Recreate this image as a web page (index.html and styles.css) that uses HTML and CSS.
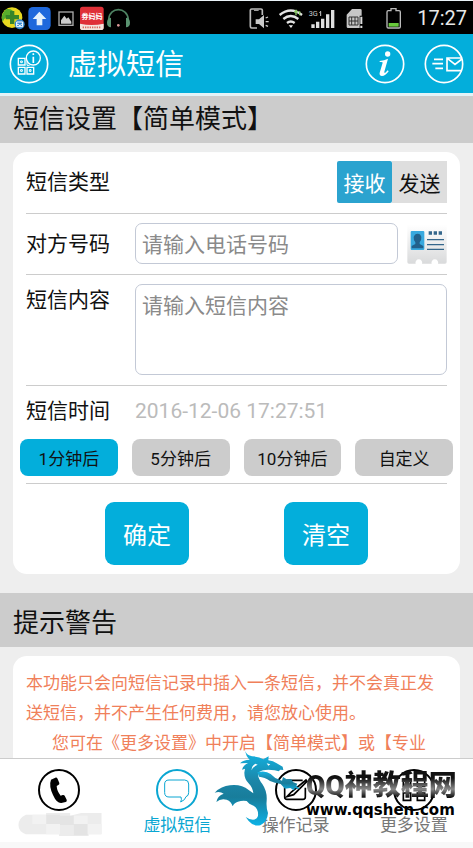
FILE: index.html
```
<!DOCTYPE html>
<html lang="zh-CN">
<head>
    <meta charset="UTF-8">
    <meta name="viewport" content="width=device-width, initial-scale=1.0">
    <title>虚拟短信</title>
    <link rel="stylesheet" href="styles.css">
</head>
<body>
    <div class="status-bar">
        <div class="status-group">
            <svg class="status-icon small" viewBox="3 6 75 90">
                <circle cx="36" cy="50" r="31" fill="#e8d820"/>
                <path d="M8 62a31 31 0 0 1 12-38q20-2 22 14-22 2-34 24z" fill="#58ad2c"/>
                <path d="M30 30h13v12h14v13H43v14H30V55H17V42h13z" fill="#36852a"/>
                <circle cx="59" cy="70" r="15" fill="#3587d0"/>
                <path d="M50 63h18v14H50zM50 70h5l2 3h5l2-3h4" fill="none" stroke="#fff" stroke-width="3"/>
            </svg>
            <svg class="status-icon small" viewBox="81 6 75 90">
                <rect x="85" y="18" width="67" height="69" rx="14" fill="#1e68dc"/>
                <path d="M118 32l21 22h-12v19h-17V54H98z" fill="#e4f1fc"/>
            </svg>
            <svg class="status-icon small" viewBox="159 6 75 90">
                <rect x="177" y="33" width="42" height="40" fill="none" stroke="#aaa" stroke-width="4"/>
                <path d="M183 68V58l10-14 7 9 5-4 9 13v6z" fill="#ccc"/>
            </svg>
            <svg class="status-icon small" viewBox="237 6 75 90">
                <rect x="240" y="17" width="71" height="70" rx="8" fill="#df3038"/>
                <path d="M240 68q36 8 71 0v12q0 7-8 7h-55q-8 0-8-7z" fill="#f4e5df"/>
                <text x="276" y="54" class="app-name">券妈妈</text>
                <path d="M248 79h55" stroke="#d9695e" stroke-width="5" stroke-dasharray="4 3"/>
            </svg>
            <svg class="status-icon small" viewBox="315 6 75 90">
                <path d="M326 56C328 16 382 16 385 56" fill="none" stroke="#4d8262" stroke-width="5"/>
                <path d="M333 50v29q-12-1-12-14t12-15zM378 50v29q12-1 12-14t-12-15z" fill="#5a9471"/>
                <circle cx="355" cy="73" r="4" fill="#d99"/>
            </svg>
        </div>
        <div class="status-group">
            <svg class="status-icon" viewBox="36 6 90 90">
                <path d="M82 42V28q0-4-4-4H50q-4 0-4 4v48q0 5 4 5h16" fill="none" stroke="#bbb" stroke-width="5"/>
                <path d="M57 28h14" stroke="#bbb" stroke-width="3"/>
                <path d="M62 55h10l15-13v40L72 69H62z" fill="#c9c9c9"/>
                <path d="M92 51l7-3M92 62h9M92 73l7 3" stroke="#ccc" stroke-width="4"/>
            </svg>
            <svg class="status-icon" viewBox="126 6 90 90">
                <g fill="none" stroke="#e4e4e4" stroke-width="7">
                    <path d="M134 42q33-27 67 0"/>
                    <path d="M145 54q22-18 45 0"/>
                    <path d="M156 66q11-9 23 0"/>
                </g>
                <path d="M161 73h13l-6 8z" fill="#eee"/>
                <path d="M183 43V29m-5 5l5-6 5 6M194 31v12" fill="none" stroke="#86c963" stroke-width="4"/>
            </svg>
            <svg class="status-icon" viewBox="216 6 90 90">
                <text x="221" y="46" class="network">3G</text>
                <path d="M257 31v14m-4-10l4-4" stroke="#ccc" stroke-width="3"/>
                <path d="M229 70h10v11h-10zM243 62h10v19h-10zM258 53h10v28h-10zM273 40h10v41h-10zM288 27h10v54h-10z" fill="#dedede"/>
            </svg>
            <svg class="status-icon" viewBox="306 6 90 90">
                <path d="M335 41l16-17h25q4 0 4 4v16h-6v37h-35q-4 0-4-4z" fill="#c7c7c7"/>
                <path d="M342 48h27v24h-27zM350 48v24M360 48v24M342 60h27" fill="none" stroke="#333" stroke-width="3"/>
                <path d="M379 47v22M379 74v7" stroke="#ddd" stroke-width="6"/>
            </svg>
            <svg class="status-icon battery" viewBox="396 6 120 90">
                <path d="M468 29v-6h15v6h9q4 0 4 4v44q0 4-4 4h-32q-4 0-4-4V33q0-4 4-4z" fill="none" stroke="#bbb" stroke-width="4"/>
                <path d="M461 66h30v11h-30z" fill="#69c93c"/>
            </svg>
            <span class="clock">17:27</span>
        </div>
    </div>

    <header class="header">
        <svg class="header-icon" viewBox="27 130 120 120">
            <circle cx="87" cy="190" r="56" stroke-width="5"/>
            <path d="M55 173h20v20H55zM55 200h20v20H55zM81 200h20v20H81z" stroke-width="4"/>
            <path d="M62 181h5v5h-5zM62 207h5v5h-5zM88 207h5v5h-5zM81 182v12h8" stroke-width="3"/>
            <circle cx="100" cy="172" r="21" stroke-width="4" fill="#03aedb"/>
            <path d="M100 158v5M100 168v19" stroke-width="5"/>
        </svg>
        <h1>虚拟短信</h1>
        <button class="icon-button" aria-label="说明">
            <svg class="header-icon" viewBox="390 130 120 120">
                <circle cx="450" cy="190" r="56" stroke-width="5"/>
                <circle cx="458" cy="160" r="8" class="solid"/>
                <path d="M434 181q14-1 25-7l-11 39q-1 5 3 3l7-7 3 3q-10 14-20 14-9-1-7-10l9-30q1-3-9-2z" class="solid"/>
            </svg>
        </button>
        <button class="icon-button" aria-label="发送">
            <svg class="header-icon" viewBox="568 130 120 120">
                <circle cx="628" cy="190" r="56" stroke-width="5"/>
                <path d="M681 172h-44v38h44M638 173l23 18 21-16M598 176h27M593 189h32M602 203h23" stroke-width="5"/>
            </svg>
        </button>
    </header>

    <main class="content">
        <h2 class="section-title first">短信设置【简单模式】</h2>
        <form class="card">
            <div class="row">
                <span class="label">短信类型</span>
                <div class="toggle">
                    <button type="button" class="active">接收</button>
                    <button type="button">发送</button>
                </div>
            </div>
            <div class="row">
                <label class="label" for="phone">对方号码</label>
                <input id="phone" type="tel" placeholder="请输入电话号码">
                <button type="button" class="icon-button contact" aria-label="联系人">
                    <svg viewBox="516 400 120 120">
                        <defs>
                            <linearGradient id="paper" x1="0" y1="0" x2="0" y2="1">
                                <stop offset="0" stop-color="#fff"/>
                                <stop offset="1" stop-color="#d9dadb"/>
                            </linearGradient>
                        </defs>
                        <path d="M517 402h118v112q0 5-5 5h-21a10 10 0 1 0-19 0h-29a10 10 0 1 0-19 0h-20q-5 0-5-5z" fill="url(#paper)"/>
                        <rect x="527" y="421" width="41" height="57" rx="3" fill="#38a9df"/>
                        <path d="M530 473v-7l11-6v-5q-6-8-5-16 3-10 12-10t11 10q1 9-5 16v5l11 6v7z" fill="#22618c"/>
                        <path d="M581 427h10M596 427h10M611 427h10" stroke="#35678c" stroke-width="10"/>
                        <path d="M576 447h51M576 462h51M576 476h51" stroke="#35678c" stroke-width="4"/>
                    </svg>
                </button>
            </div>
            <div class="row top">
                <label class="label" for="message">短信内容</label>
                <textarea id="message" placeholder="请输入短信内容"></textarea>
            </div>
            <div class="time-row">
                <span class="label">短信时间</span>
                <span class="time">2016-12-06 17:27:51</span>
            </div>
            <div class="delays">
                <button type="button" class="active">1分钟后</button>
                <button type="button">5分钟后</button>
                <button type="button">10分钟后</button>
                <button type="button">自定义</button>
            </div>
            <div class="actions">
                <button type="submit">确定</button>
                <button type="reset">清空</button>
            </div>
        </form>

        <h2 class="section-title">提示警告</h2>
        <div class="card tips">
            <p>本功能只会向短信记录中插入一条短信，并不会真正发送短信，并不产生任何费用，请您放心使用。</p>
            <p class="indent">您可在《更多设置》中开启【简单模式】或【专业</p>
        </div>
    </main>

    <nav class="nav">
        <a href="#" class="nav-item" aria-label="电话">
            <svg class="nav-icon" viewBox="114 388 126 126">
                <circle cx="177" cy="451" r="60"/>
                <path d="M153 420l13-6q5-1 7 4l5 12q1 4-3 6l-5 3q1 16 12 29l6-2q4-1 6 2l6 12q2 5-3 7l-13 3q-14 1-25-24-13-28-6-46z" class="handset"/>
            </svg>
            <svg class="mosaic" viewBox="0 0 90 26">
                <path d="M8 2h22V0h26v3l12-3h22v23H76v2H44v-2H8q-8-3-8-10T8 2z" fill="#ececec"/>
                <path d="M30 2h15v10H30zM45 3h15v10H45zM60 12h15v12H60z" fill="#e4e4e4"/>
                <path d="M60 3h15v9H60zM75 12h15v11H75zM15 2h15v10H15zM30 12h15v11H30z" fill="#f2f2f2"/>
            </svg>
        </a>
        <a href="#" class="nav-item active">
            <svg class="nav-icon" viewBox="468 388 126 126">
                <circle cx="531" cy="451" r="60"/>
                <path d="M507 421h47q12 0 12 12v26q0 10-8 12-2 10-16 16 4-7 1-15h-36q-13 0-13-13v-26q0-12 13-12z" class="thin"/>
            </svg>
            <span>虚拟短信</span>
        </a>
        <a href="#" class="nav-item">
            <svg class="nav-icon" viewBox="208 88 126 126">
                <circle cx="271" cy="151" r="60"/>
                <path d="M291 122h-47q-7 0-7 7v43q0 7 7 7h48q7 0 7-7v-28M244 171l13-14 44-36 3 4-40 40z" class="thin"/>
            </svg>
            <span>操作记录</span>
        </a>
        <a href="#" class="nav-item">
            <svg class="nav-icon" viewBox="563 88 126 126">
                <circle cx="626" cy="151" r="60"/>
                <path d="M594 118h22v22h-22zM636 118h22v22h-22zM594 160h22v22h-22zM636 160h22v22h-22z" class="thin"/>
            </svg>
            <span>更多设置</span>
        </a>
    </nav>

    <div class="watermark">
        <svg class="dragon" viewBox="3 6 270 240">
            <defs>
                <linearGradient id="scale" x1="0" y1="0" x2="0" y2="1">
                    <stop offset="0" stop-color="#12b4e4"/>
                    <stop offset="0.4" stop-color="#1c86a8"/>
                    <stop offset="0.62" stop-color="#187d9b"/>
                    <stop offset="1" stop-color="#0db2e6"/>
                </linearGradient>
            </defs>
            <g fill="url(#scale)">
                <path d="M100 9Q104 22 120 25Q142 25 154 34L170 25L169 37Q184 39 194 46L212 56L214 66L205 65L200 70L188 67Q168 64 153 67Q140 70 138 80Q139 92 151 108Q166 130 164 158Q162 178 168 195Q166 222 145 232Q124 236 110 219L101 207Q112 215 123 215Q136 213 138 203Q140 184 126 174L112 167L104 159Q90 157 78 161Q66 164 62 175Q58 160 44 155Q26 150 13 162Q17 142 35 137Q24 129 8 134Q28 114 54 112Q88 108 110 126L124 136Q122 118 111 107Q97 94 97 74L99 62L90 65Q94 52 108 45L84 46Q94 35 113 35Q101 24 100 9Z"/>
                <path d="M136 73Q160 66 176 78L190 90L210 98L213 87L224 94L237 93L244 103L256 107L253 113L264 124L246 120L248 128L235 120L219 122L206 108Q188 105 174 99Q158 87 141 86Z"/>
            </g>
            <path fill="#fff" d="M164 46l11 3-6 4zM130 47q-12 7-11 20 4-12 18-17z"/>
        </svg>
        <div class="watermark-text">
            <span class="watermark-name">QQ神教程网</span>
            <span class="watermark-url">www.qqshen.com</span>
        </div>
    </div>
</body>
</html>
```
FILE: styles.css
```
* {
    box-sizing: border-box;
}
body {
    font-family: Roboto, "Noto Sans CJK SC", sans-serif;
    background-color: #f8f8f8;
    color: #111;
    margin: 0;
    padding-bottom: 6px;
    height: 100vh;
    display: flex;
    flex-direction: column;
    position: relative;
    overflow: hidden;
}
h1, h2, p {
    margin: 0;
    font-weight: normal;
}
button, input, textarea {
    font-family: inherit;
    margin: 0;
    padding: 0;
    border: none;
}
button {
    cursor: pointer;
    color: #111;
}

/* status bar */
.status-bar {
    flex: none;
    display: flex;
    justify-content: space-between;
    height: 34px;
    padding: 0 6px 0 1px;
    border-top: 1px solid #eaf3f8;
    background-color: #000;
}
.status-group {
    display: flex;
    align-items: center;
}
.status-icon {
    width: 30px;
    height: 30px;
}
.status-icon.small {
    width: 25px;
    margin-right: 1px;
}
.status-icon.battery {
    width: 40px;
}
.app-name {
    font-size: 21px;
    font-weight: bold;
    fill: #fff;
    text-anchor: middle;
}
.network {
    font-size: 22px;
    fill: #ccc;
}
.clock {
    margin-left: 10px;
    font-size: 20px;
    color: #e8e8e8;
}

/* header */
.header {
    flex: none;
    display: flex;
    align-items: center;
    gap: 19px;
    height: 62px;
    padding: 0 9px;
    background-color: #03aedb;
    border-bottom: 3px solid #e3f3f7;
}
.header h1 {
    flex: 1;
    padding-top: 2px;
    font-size: 29px;
    line-height: 40px;
    color: #fff;
}
.header-icon {
    display: block;
    width: 40px;
    height: 40px;
    fill: none;
    stroke: #fff;
}
.solid {
    fill: #fff;
    stroke: none;
}
.icon-button {
    flex: none;
    background: none;
}

/* content */
.content {
    flex: 1;
    min-height: 0;
    overflow: hidden;
    background-color: #eee;
}
.section-title {
    height: 54px;
    padding: 4px 13px 0;
    font-size: 26px;
    line-height: 52px;
    background-color: #ccc;
}
.section-title.first {
    height: 47px;
    padding-top: 0;
    line-height: 46px;
}
.card {
    margin: 9px 13px 19px;
    padding: 0 13px;
    border-radius: 14px;
    background-color: #fff;
}
.row {
    display: flex;
    align-items: center;
    padding: 9px 0 10px;
    border-bottom: 1px solid #ccc;
}
.row.top {
    align-items: flex-start;
}
.label {
    flex: none;
    width: 109px;
    font-size: 21px;
    line-height: 32px;
}
.toggle {
    display: flex;
    margin-left: auto;
}
.toggle button {
    width: 55px;
    height: 42px;
    font-size: 21px;
    background-color: #dedede;
}
.toggle .active {
    background-color: #2ba3cf;
    border-radius: 2px;
    color: #fff;
}
input, textarea {
    flex: 1;
    min-width: 0;
    border: 1px solid #c3c9d6;
    border-radius: 7px;
    background-color: #fff;
    font-size: 21px;
}
input {
    height: 41px;
    padding: 2px 6px 0;
}
textarea {
    display: block;
    height: 91px;
    padding: 5px 6px;
    line-height: 32px;
    resize: none;
}
::placeholder {
    color: #8a8a8a;
}
.contact {
    margin-left: 9px;
}
.contact svg {
    display: block;
    width: 40px;
    height: 40px;
}
.time-row {
    display: flex;
    align-items: center;
    height: 50px;
}
.time {
    font-size: 21px;
    color: #bbb;
}
.delays {
    display: flex;
    gap: 14px;
    margin: 3px -6px 7px;
}
.delays button {
    flex: 1;
    height: 37px;
    border-radius: 8px;
    font-size: 17px;
    background-color: #ccc;
}
.delays .active {
    background-color: #03aedb;
}
.actions {
    display: flex;
    justify-content: center;
    gap: 95px;
    padding: 18px 0 9px;
    border-top: 1px solid #ccc;
}
.actions button {
    width: 84px;
    height: 63px;
    border-radius: 9px;
    font-size: 24px;
    color: #fff;
    background-color: #03aedb;
}
.tips {
    padding-top: 12px;
    padding-bottom: 20px;
    font-size: 17px;
    line-height: 30px;
    color: #f0805a;
}
.indent {
    text-indent: 26px;
    white-space: nowrap;
}

/* bottom navigation */
.nav {
    flex: none;
    display: flex;
    padding: 10px 0 5px;
    border-top: 1px solid #ccc;
    background-color: #fff;
}
.nav-item {
    flex: 1;
    display: flex;
    flex-direction: column;
    align-items: center;
    gap: 2px;
    font-size: 17px;
    line-height: 24px;
    color: #777;
    text-decoration: none;
}
.nav-icon {
    width: 42px;
    height: 42px;
    fill: none;
    stroke: #000;
    stroke-width: 6px;
}
.nav-icon .thin {
    stroke-width: 5px;
}
.nav-icon .handset {
    fill: #000;
    stroke: none;
}
.nav-item.active {
    color: #0aa6d2;
}
.nav-item.active .nav-icon {
    stroke: #0aa6d2;
}
.nav-item.active .thin {
    stroke-width: 3px;
}
.mosaic {
    width: 90px;
    height: 24px;
    margin-left: 2px;
}

/* site watermark over the navigation */
.watermark {
    position: absolute;
    right: 15px;
    bottom: 18px;
    display: flex;
    gap: 3px;
    pointer-events: none;
}
.dragon {
    width: 90px;
    height: 80px;
}
.watermark-text {
    display: flex;
    flex-direction: column;
    padding-top: 20px;
    width: 152px;
}
.watermark-name {
    font-size: 28px;
    font-weight: 900;
    line-height: 32px;
    white-space: nowrap;
    color: transparent;
    background: linear-gradient(#111 25%, #888 60%, #111 85%);
    -webkit-background-clip: text;
    background-clip: text;
}
.watermark-url {
    font-family: "DejaVu Sans", sans-serif;
    font-size: 15px;
    font-weight: bold;
    line-height: 16px;
    color: #000;
}
```
